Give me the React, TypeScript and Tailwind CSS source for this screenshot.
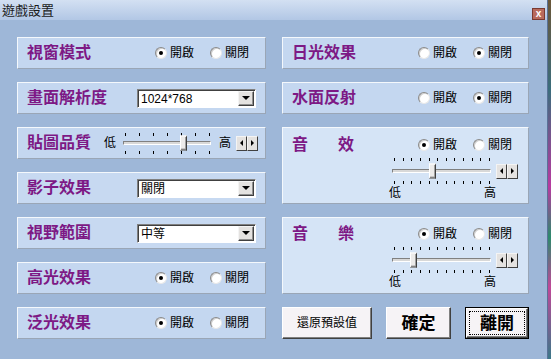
import React from "react";

const cjk = "font-['Liberation_Sans','Noto_Sans_CJK_TC','Noto_Sans_CJK_SC',sans-serif]";

function Radio({ checked }: { checked?: boolean }) {
  return (
    <span className="flex h-[12px] w-[12px] shrink-0 items-center justify-center rounded-full border border-t-[#8a8a8a] border-l-[#8a8a8a] border-r-[#e8e8e8] border-b-[#e8e8e8] bg-white shadow-[inset_1px_1px_0_#cfcfcf]">
      {checked && <span className="h-[4px] w-[4px] rounded-full bg-black" />}
    </span>
  );
}

function RadioPair({ on }: { on: boolean }) {
  return (
    <div className="flex items-center text-[12px] leading-none text-black">
      <Radio checked={on} />
      <span className="ml-[3px]">開啟</span>
      <span className="ml-[16px]">
        <Radio checked={!on} />
      </span>
      <span className="ml-[3px]">關閉</span>
    </div>
  );
}

function Panel({ children, className }: { children: React.ReactNode; className?: string }) {
  return (
    <div
      className={`flex border border-t-[#f4f8fc] border-l-[#f4f8fc] border-b-[#9aa6b6] border-r-[#9aa6b6] ${className ?? ""}`}
    >
      {children}
    </div>
  );
}

function Label({ text, className }: { text: string; className?: string }) {
  return (
    <span className={`text-[16px] font-bold leading-none text-[#7d1985] ${className ?? ""}`}>{text}</span>
  );
}

function Select({ value }: { value: string }) {
  return (
    <div className="flex h-[19px] w-[119px] items-center border border-t-[#808080] border-l-[#808080] border-b-white border-r-white bg-white shadow-[inset_1px_1px_0_#404040]">
      <span className="flex-1 pl-[3px] pt-[1px] text-[12px] leading-none text-black">{value}</span>
      <span className="mr-[1px] flex h-[15px] w-[16px] items-center justify-center border border-t-[#f4f4f4] border-l-[#f4f4f4] border-b-[#404040] border-r-[#404040] bg-[#e4e2e0] shadow-[inset_-1px_-1px_0_#909090]">
        <span className="h-0 w-0 border-l-[4px] border-r-[4px] border-t-[4px] border-l-transparent border-r-transparent border-t-black" />
      </span>
    </div>
  );
}

function Spin() {
  return (
    <div className="flex">
      <span className="flex h-[15px] w-[11px] items-center justify-center border border-t-[#f4f4f4] border-l-[#f4f4f4] border-b-[#404040] border-r-[#404040] bg-[#e4e2e0]">
        <span className="h-0 w-0 border-t-[3px] border-b-[3px] border-r-[3px] border-t-transparent border-b-transparent border-r-black" />
      </span>
      <span className="flex h-[15px] w-[11px] items-center justify-center border border-t-[#f4f4f4] border-l-[#f4f4f4] border-b-[#404040] border-r-[#404040] bg-[#e4e2e0]">
        <span className="h-0 w-0 border-t-[3px] border-b-[3px] border-l-[3px] border-t-transparent border-b-transparent border-l-black" />
      </span>
    </div>
  );
}

function Slider({
  className,
  width,
  ticks,
  thumb,
}: {
  className: string;
  width: number;
  ticks: number;
  thumb: number;
}) {
  const pos = Array.from({ length: ticks }, (_, i) => Math.round(2 + (i * (width - 4)) / (ticks - 1)));
  return (
    <div className={`relative ${className}`}>
      {pos.map((p) => (
        <span key={`t${p}`} className="absolute top-0 h-[3px] w-px bg-black" style={{ left: p }} />
      ))}
      {pos.map((p) => (
        <span key={`b${p}`} className="absolute bottom-0 h-[3px] w-px bg-black" style={{ left: p }} />
      ))}
      <div className="absolute left-0 right-0 top-1/2 h-[4px] -translate-y-1/2 border border-t-[#808080] border-l-[#808080] border-b-white border-r-white bg-[#d8d8d8]" />
      <div
        className="absolute top-1/2 h-[15px] w-[7px] -translate-y-1/2 border border-t-white border-l-white border-b-[#404040] border-r-[#404040] bg-[#ecebea] shadow-[inset_-1px_-1px_0_#a0a0a0]"
        style={{ left: thumb }}
      />
    </div>
  );
}

function Button({
  children,
  className,
  focused,
}: {
  children: React.ReactNode;
  className?: string;
  focused?: boolean;
}) {
  if (focused) {
    return (
      <div className={`flex border border-black ${className ?? ""}`}>
        <div className="flex flex-1 border border-t-white border-l-white border-b-[#404040] border-r-[#404040] bg-[#f6f3f6] p-[2px] shadow-[inset_-1px_-1px_0_#808080]">
          <div className="flex flex-1 items-center justify-center border border-dotted border-black">{children}</div>
        </div>
      </div>
    );
  }
  return (
    <div
      className={`flex items-center justify-center border border-t-white border-l-white border-b-[#404040] border-r-[#404040] bg-[#f6f3f6] shadow-[inset_-1px_-1px_0_#808080] ${className ?? ""}`}
    >
      {children}
    </div>
  );
}

export default function App() {
  return (
    <div className={`flex h-[359px] w-[551px] overflow-hidden ${cjk}`}>
      <div className="flex w-[548px] flex-col border-r border-r-[#5a7298] bg-[#9eb7d8]">
        {/* Title bar */}
        <div className="flex h-[20px] items-center justify-between bg-gradient-to-b from-[#d3e0f2] to-[#b2c7e5] pl-[2px] pr-[2px]">
          <span className="text-[13px] leading-none text-[#1a1a1a]">遊戲設置</span>
          <span className="mt-[7px] flex h-[12px] w-[13px] items-center justify-center border border-[#7a3a30] bg-[#b86a5c] text-[10px] font-bold leading-none text-white">
            x
          </span>
        </div>

        <div className="flex gap-[16px] pl-[17px] pt-[17px]">
          {/* Left column */}
          <div className="flex w-[249px] flex-col gap-[13px]">
            <Panel className="h-[32px] items-center bg-[#c4d7f0] pl-[9px]">
              <Label text="視窗模式" className="w-[128px]" />
              <RadioPair on />
            </Panel>
            <Panel className="h-[32px] items-center bg-[#c4d7f0] pl-[9px]">
              <Label text="畫面解析度" className="w-[110px]" />
              <Select value="1024*768" />
            </Panel>
            <Panel className="h-[32px] items-center bg-[#c4d7f0] pl-[9px]">
              <Label text="貼圖品質" className="w-[77px]" />
              <span className="text-[12px] leading-none">低</span>
              <Slider className="ml-[7px] h-[21px] w-[88px]" width={88} ticks={7} thumb={57} />
              <span className="ml-[8px] text-[12px] leading-none">高</span>
              <span className="ml-[5px]">
                <Spin />
              </span>
            </Panel>
            <Panel className="h-[32px] items-center bg-[#c7d9f1] pl-[9px]">
              <Label text="影子效果" className="w-[110px]" />
              <Select value="關閉" />
            </Panel>
            <Panel className="h-[32px] items-center bg-[#c7d9f1] pl-[9px]">
              <Label text="視野範圍" className="w-[110px]" />
              <Select value="中等" />
            </Panel>
            <Panel className="h-[32px] items-center bg-[#c4d7f0] pl-[9px]">
              <Label text="高光效果" className="w-[128px]" />
              <RadioPair on />
            </Panel>
            <Panel className="h-[32px] items-center bg-[#c4d7f0] pl-[9px]">
              <Label text="泛光效果" className="w-[128px]" />
              <RadioPair on />
            </Panel>
          </div>

          {/* Right column */}
          <div className="flex w-[247px] flex-col gap-[13px]">
            <Panel className="h-[32px] items-center bg-[#c4d7f0] pl-[9px]">
              <Label text="日光效果" className="w-[126px]" />
              <RadioPair on={false} />
            </Panel>
            <Panel className="h-[32px] items-center bg-[#c4d7f0] pl-[9px]">
              <Label text="水面反射" className="w-[126px]" />
              <RadioPair on={false} />
            </Panel>
            <Panel className="h-[77px] flex-col bg-[#d5e4f6] pl-[9px]">
              <div className="mt-[9px] flex h-[16px] items-center">
                <div className="flex w-[126px]">
                  <Label text="音" />
                  <Label text="效" className="ml-[30px]" />
                </div>
                <RadioPair on />
              </div>
              <div className="ml-[100px] mt-[5px] flex items-center">
                <Slider className="h-[26px] w-[99px]" width={99} ticks={12} thumb={37} />
                <span className="ml-[5px]">
                  <Spin />
                </span>
              </div>
              <div className="ml-[97px] mt-[3px] flex w-[107px] justify-between text-[12px] leading-none">
                <span>低</span>
                <span>高</span>
              </div>
            </Panel>
            <Panel className="h-[77px] flex-col bg-[#d5e4f6] pl-[9px]">
              <div className="mt-[8px] flex h-[16px] items-center">
                <div className="flex w-[126px]">
                  <Label text="音" />
                  <Label text="樂" className="ml-[30px]" />
                </div>
                <RadioPair on />
              </div>
              <div className="ml-[100px] mt-[5px] flex items-center">
                <Slider className="h-[26px] w-[99px]" width={99} ticks={12} thumb={18} />
                <span className="ml-[5px]">
                  <Spin />
                </span>
              </div>
              <div className="ml-[97px] mt-[3px] flex w-[107px] justify-between text-[12px] leading-none">
                <span>低</span>
                <span>高</span>
              </div>
            </Panel>
            <div className="flex gap-[14px]">
              <Button className="h-[32px] w-[90px]">
                <span className="text-[12px] leading-none">還原預設值</span>
              </Button>
              <Button className="h-[32px] w-[65px]">
                <span className="text-[17px] font-bold leading-none">確定</span>
              </Button>
              <Button className="h-[32px] w-[64px]" focused>
                <span className="text-[17px] font-bold leading-none">離開</span>
              </Button>
            </div>
          </div>
        </div>
      </div>
      {/* desktop peeking through on the right */}
      <div className="w-[3px] bg-[linear-gradient(180deg,#6a5638_0%,#3b6d7c_25%,#b83aa0_52%,#2c8a6c_66%,#c04898_80%,#3a7888_100%)]" />
    </div>
  );
}
